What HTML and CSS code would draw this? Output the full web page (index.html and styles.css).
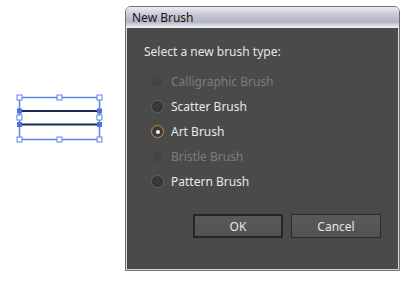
FILE: index.html
```html
<!DOCTYPE html>
<html lang="en">
<head>
  <meta charset="UTF-8">
  <title>New Brush</title>
  <link rel="stylesheet" href="styles.css">
</head>
<body>
  <div class="page">
    <svg class="selection" width="88" height="50" viewBox="0 0 88 50">
      <rect x="3.5" y="3.5" width="80" height="42" fill="none" stroke="#5b82e6" stroke-width="1.5"/>
      <line x1="3.5" y1="17" x2="83.5" y2="17" stroke="#1f2c52" stroke-width="2"/>
      <line x1="3.5" y1="30.5" x2="83.5" y2="30.5" stroke="#1f2c52" stroke-width="2"/>
      <g fill="#fff" stroke="#5b82e6" stroke-width="1">
        <rect x="1" y="1" width="5" height="5"/>
        <rect x="41" y="1" width="5" height="5"/>
        <rect x="81" y="1" width="5" height="5"/>
        <rect x="1" y="21" width="5" height="5"/>
        <rect x="81" y="21" width="5" height="5"/>
        <rect x="1" y="43" width="5" height="5"/>
        <rect x="41" y="43" width="5" height="5"/>
        <rect x="81" y="43" width="5" height="5"/>
      </g>
      <g fill="#4d72e0">
        <rect x="1" y="14.5" width="5" height="5"/>
        <rect x="81" y="14.5" width="5" height="5"/>
        <rect x="1" y="28" width="5" height="5"/>
        <rect x="81" y="28" width="5" height="5"/>
      </g>
    </svg>

    <div class="dialog">
      <div class="titlebar">New Brush</div>
      <div class="dialog-body">
        <p class="prompt">Select a new brush type:</p>
        <ul class="options">
          <li class="option disabled"><span class="radio"></span>Calligraphic Brush</li>
          <li class="option"><span class="radio"></span>Scatter Brush</li>
          <li class="option"><span class="radio checked"></span>Art Brush</li>
          <li class="option disabled"><span class="radio"></span>Bristle Brush</li>
          <li class="option"><span class="radio"></span>Pattern Brush</li>
        </ul>
        <div class="actions">
          <button class="btn default">OK</button>
          <button class="btn">Cancel</button>
        </div>
      </div>
    </div>
  </div>
</body>
</html>
```

FILE: styles.css
```css
body {
  margin: 0;
  background: #fff;
  font-family: "Noto Sans", "DejaVu Sans", sans-serif;
}
.page {
  display: flex;
  align-items: flex-start;
  padding: 6px 0 0 16px;
}
.selection {
  display: block;
  margin-top: 88px;
}
.dialog {
  margin-left: 21px;
  width: 275px;
  height: 265px;
  box-sizing: border-box;
  display: flex;
  flex-direction: column;
  border: 1px solid #6f6f74;
  border-radius: 6px 6px 0 0;
  overflow: hidden;
}
.titlebar {
  height: 21px;
  padding-left: 6px;
  font-size: 12px;
  line-height: 21px;
  color: #151515;
  background: linear-gradient(to bottom, #ebebf1 0%, #c6c6d3 40%, #b3b3c6 70%, #f4f4f7 100%);
}
.dialog-body {
  flex: 1;
  background: #4a4a4a;
  border: 1px solid #d6d6d8;
  border-top: none;
  padding: 15px 17px 0;
  display: flex;
  flex-direction: column;
}
.prompt {
  margin: 0;
  font-size: 12px;
  color: #e4e4e4;
}
.options {
  list-style: none;
  margin: 9px 0 0 7px;
  padding: 0;
}
.option {
  display: flex;
  align-items: center;
  height: 25px;
  font-size: 12px;
  color: #e8e8e8;
}
.option.disabled {
  color: #7c7c7c;
}
.radio {
  width: 11px;
  height: 11px;
  border-radius: 50%;
  margin-right: 7px;
  background: radial-gradient(circle at 50% 40%, #3e3e3e, #2c2c2c);
  border: 1px solid #606060;
  display: flex;
  align-items: center;
  justify-content: center;
}
.disabled .radio {
  background: #444;
  border-color: #4f4f4f;
}
.radio.checked {
  border-color: #d08a3c;
  background: #3a3a3a;
}
.radio.checked::after {
  content: "";
  width: 4px;
  height: 4px;
  border-radius: 50%;
  background: #f2f2f2;
}
.actions {
  display: flex;
  justify-content: flex-end;
  gap: 8px;
  margin-top: 20px;
}
.btn {
  width: 90px;
  height: 24px;
  font-family: inherit;
  font-size: 12px;
  color: #e6e6e6;
  background: linear-gradient(to bottom, #5a5a5a, #525252);
  border: 1px solid #2b2b2b;
  border-radius: 0;
  padding: 0;
}
.btn.default {
  border: 2px solid #262626;
}
```
